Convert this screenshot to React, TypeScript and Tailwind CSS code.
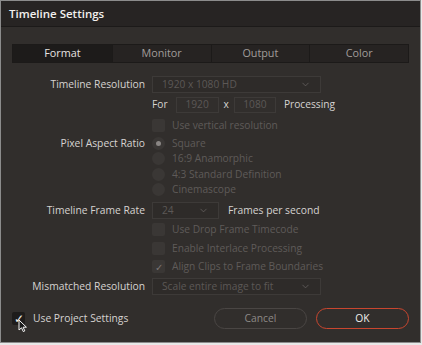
import { ChevronDown } from 'lucide-react';

const Label = ({ children }: { children: string }) => (
  <div className="w-[140px] shrink-0 text-right text-[10.3px] text-[#d6d3d1]">{children}</div>
);

const Select = ({ value, width }: { value: string; width: string }) => (
  <div
    className={`${width} h-[17px] flex items-center justify-between px-[9px] border border-[#3d3a38] bg-[#2e2b29] text-[10.2px] text-[#5c5856]`}
  >
    <span>{value}</span>
    <ChevronDown size={11} strokeWidth={1.5} className="text-[#6d6967]" />
  </div>
);

const Check = ({ label, checked = false }: { label: string; checked?: boolean }) => (
  <div className="flex items-center h-[18.5px]">
    <div className="w-[13px] h-[13px] rounded-[2px] bg-[#3a3735] flex items-center justify-center text-[10px] text-[#7a7674] leading-none">
      {checked ? '✓' : ''}
    </div>
    <span className="ml-[7px] text-[10.2px] text-[#5f5b59]">{label}</span>
  </div>
);

const Radio = ({ label, on = false }: { label: string; on?: boolean }) => (
  <div className="flex items-center h-[15.3px]">
    <div className="w-[13px] h-[13px] rounded-full bg-[#3a3735] flex items-center justify-center">
      {on && <div className="w-[5px] h-[5px] rounded-full bg-[#8a8684]" />}
    </div>
    <span className="ml-[7px] text-[10.2px] text-[#5f5b59]">{label}</span>
  </div>
);

export default function App() {
  return (
    <div className="w-[422px] h-[345px] bg-[#e8e8e8]" style={{ fontFamily: '"Open Sans", "Noto Sans", sans-serif' }}>
      <div className="w-[421px] h-[343px] border border-[#8c8c8c] bg-[#312e2c] flex flex-col">
        <div className="h-[26px] bg-[#272423] border-b border-[#1c1a19] flex items-center px-[8px]">
          <span className="text-[11.5px] font-semibold text-[#f2f0ee]">Timeline Settings</span>
        </div>

        <div className="px-[11px] pt-[17px]">
          <div className="grid grid-cols-4 h-[19px] border border-[#1c1a19] bg-[#262322] text-[10.8px]">
            <div className="flex items-center justify-center bg-[#1d1b1a] text-[#e6e3e1]">Format</div>
            <div className="flex items-center justify-center border-l border-[#1c1a19] text-[#a19d9a]">Monitor</div>
            <div className="flex items-center justify-center border-l border-[#1c1a19] text-[#a19d9a]">Output</div>
            <div className="flex items-center justify-center border-l border-[#1c1a19] text-[#a19d9a]">Color</div>
          </div>
        </div>

        <div className="flex flex-col pt-[13px] pl-[4px]">
          <div className="flex items-center gap-[7px] h-[17px]">
            <Label>Timeline Resolution</Label>
            <Select value="1920 x 1080 HD" width="w-[169px]" />
          </div>

          <div className="flex items-center h-[17px] mt-[3px] ml-[147px] text-[10.2px]">
            <span className="text-[#d6d3d1]">For</span>
            <div className="ml-[8px] w-[43px] h-[16px] border border-[#3d3a38] flex items-center justify-center text-[#5c5856]">1920</div>
            <span className="ml-[5px] text-[#d6d3d1]">x</span>
            <div className="ml-[5px] w-[42px] h-[16px] border border-[#3d3a38] flex items-center justify-center text-[#5c5856]">1080</div>
            <span className="ml-[8px] text-[#d6d3d1]">Processing</span>
          </div>

          <div className="ml-[147px] mt-[3px]">
            <Check label="Use vertical resolution" />
          </div>

          <div className="flex items-start gap-[7px] mt-[1.5px]">
            <div className="h-[15.3px] flex items-center">
              <Label>Pixel Aspect Ratio</Label>
            </div>
            <div className="flex flex-col">
              <Radio label="Square" on />
              <Radio label="16:9 Anamorphic" />
              <Radio label="4:3 Standard Definition" />
              <Radio label="Cinemascope" />
            </div>
          </div>

          <div className="flex items-center gap-[7px] h-[17px] mt-[5px]">
            <Label>Timeline Frame Rate</Label>
            <Select value="24" width="w-[67px]" />
            <span className="ml-[2px] text-[10.3px] text-[#d6d3d1]">Frames per second</span>
          </div>

          <div className="ml-[147px] mt-[1.25px] flex flex-col">
            <Check label="Use Drop Frame Timecode" />
            <Check label="Enable Interlace Processing" />
            <Check label="Align Clips to Frame Boundaries" checked />
          </div>

          <div className="flex items-center gap-[7px] h-[17px] mt-[2.25px]">
            <Label>Mismatched Resolution</Label>
            <Select value="Scale entire image to fit" width="w-[169px]" />
          </div>
        </div>

        <div className="flex items-center mt-[13px] px-[11px]">
          <div className="relative w-[13px] h-[13px] rounded-[2px] bg-[#1e1c1b] flex items-center justify-center text-[12px] text-[#f0eeec] leading-none">
            ✓
            <svg className="absolute left-[6px] top-[7px]" width="10" height="14" viewBox="0 0 10 14">
              <path d="M1 1 L1 11 L3.5 8.8 L5.3 12.6 L6.8 11.9 L5.1 8.2 L8.4 8.2 Z" fill="#1a1a1a" stroke="#f5f5f5" strokeWidth="1" />
            </svg>
          </div>
          <span className="ml-[8px] text-[10.3px] text-[#d6d3d1]">Use Project Settings</span>
          <div className="flex-1" />
          <button className="w-[93px] h-[21px] rounded-full border border-[#4a4644] text-[10.3px] text-[#8d8986]">Cancel</button>
          <button className="ml-[9px] w-[93px] h-[21px] rounded-full border border-[#c8462f] text-[10.3px] text-[#f0eeec]">OK</button>
        </div>
      </div>
    </div>
  );
}
